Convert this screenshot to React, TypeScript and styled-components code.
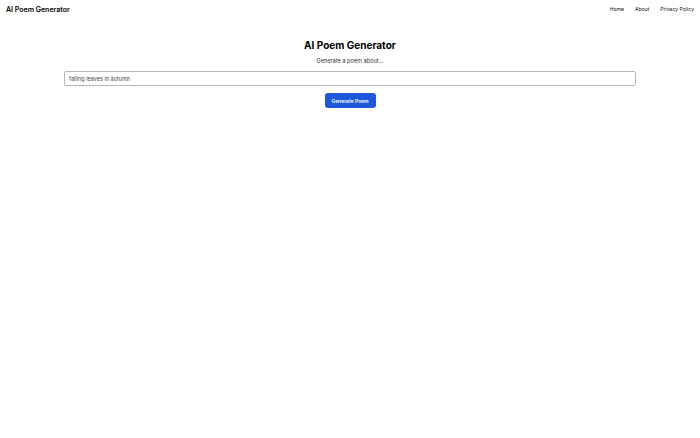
import React from "react";
import styled, { createGlobalStyle } from "styled-components";

const Global = createGlobalStyle`
  html, body { margin: 0; padding: 0; background: #ffffff; }
  body { font-family: Inter, "Liberation Sans", Arial, sans-serif; color: #111111; }
  * { box-sizing: border-box; }
`;

const Header = styled.header`
  display: flex;
  align-items: center;
  justify-content: space-between;
  height: 18px;
  padding: 0 6px;
`;

const Brand = styled.div`
  font-size: 7px;
  font-weight: 600;
  color: #000;
`;

const Nav = styled.nav`
  display: flex;
  gap: 11px;
`;

const NavLink = styled.a`
  font-size: 5.1px;
  color: #111;
  text-decoration: none;
`;

const Main = styled.main`
  display: flex;
  flex-direction: column;
  align-items: center;
  padding: 21px 64px 0;
`;

const Title = styled.h1`
  margin: 0;
  font-size: 10px;
  font-weight: 700;
  color: #000;
  line-height: 12px;
`;

const Subtitle = styled.p`
  margin: 6px 0 0;
  font-size: 5.6px;
  color: #333;
  line-height: 8px;
`;

const Input = styled.input`
  margin-top: 6px;
  width: 100%;
  height: 15px;
  border: 1px solid #b8b8b8;
  border-radius: 2px;
  padding: 0 4px;
  font-family: inherit;
  font-size: 5.5px;
  color: #444;
  outline: none;
`;

const Button = styled.button`
  margin-top: 7px;
  width: 51px;
  height: 15px;
  border: none;
  border-radius: 3px;
  background: #1d57db;
  color: #fff;
  font-family: inherit;
  font-size: 5px;
  font-weight: 600;
  cursor: pointer;
`;

export default function App() {
  return (
    <>
      <Global />
      <Header>
        <Brand>AI Poem Generator</Brand>
        <Nav>
          <NavLink href="#">Home</NavLink>
          <NavLink href="#">About</NavLink>
          <NavLink href="#">Privacy Policy</NavLink>
        </Nav>
      </Header>
      <Main>
        <Title>AI Poem Generator</Title>
        <Subtitle>Generate a poem about...</Subtitle>
        <Input defaultValue="falling leaves in autumn" />
        <Button>Generate Poem</Button>
      </Main>
    </>
  );
}
